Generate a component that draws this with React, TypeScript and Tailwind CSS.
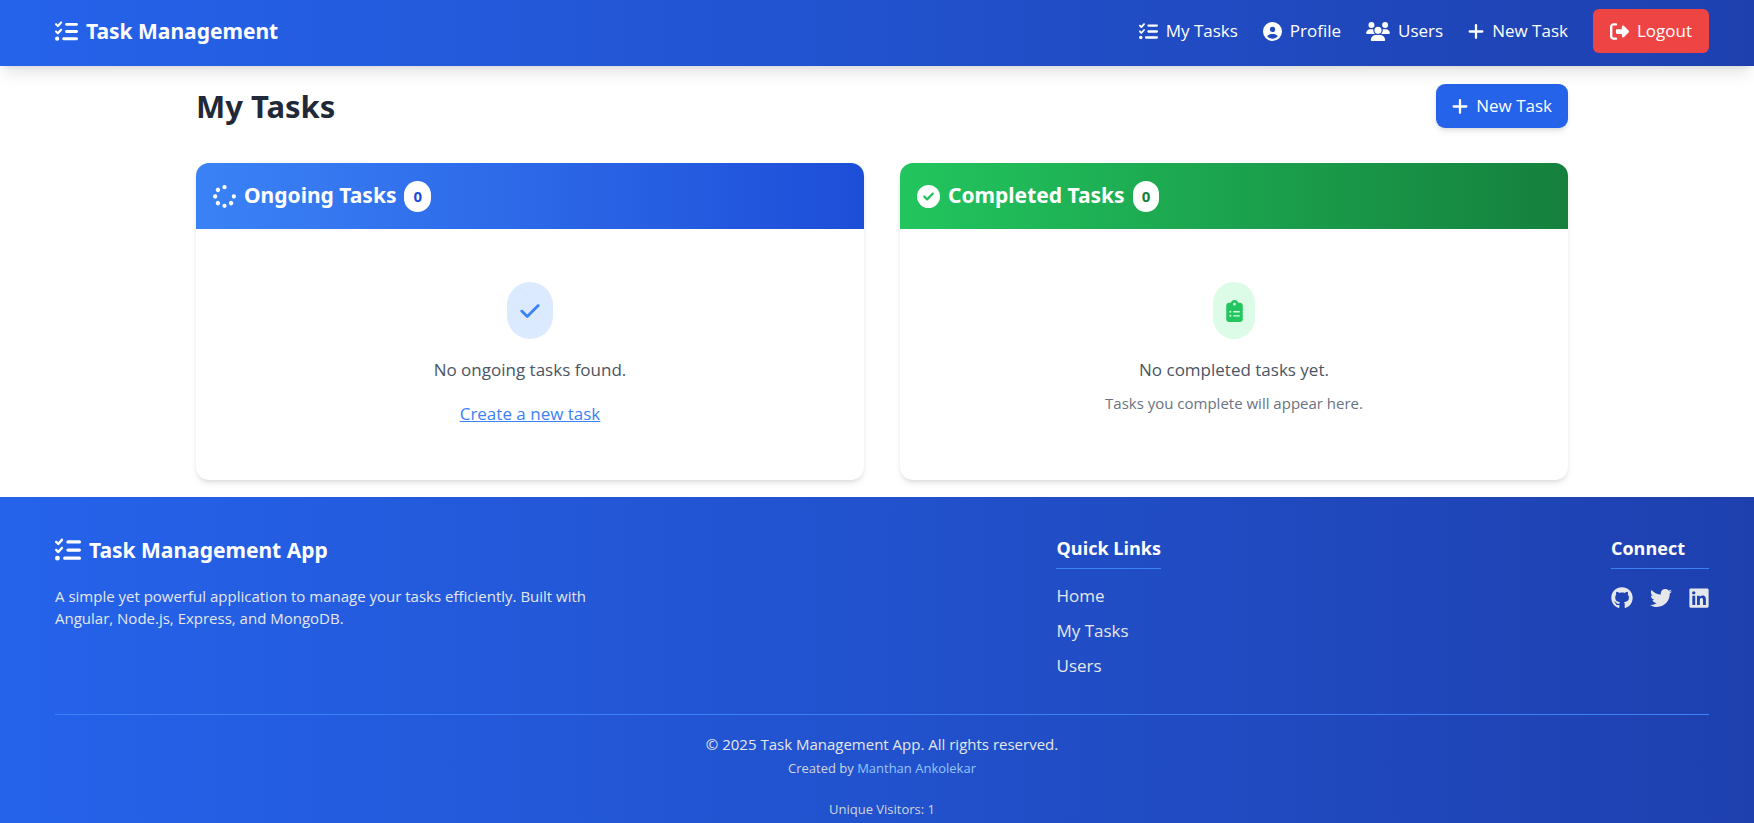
import type { ReactNode } from "react";
import {
  FaCheck,
  FaCircleCheck,
  FaCircleUser,
  FaClipboardList,
  FaGithub,
  FaLinkedin,
  FaListCheck,
  FaPlus,
  FaRightFromBracket,
  FaSpinner,
  FaTwitter,
  FaUsers,
} from "react-icons/fa6";

function NavLink({ icon, children }: { icon: ReactNode; children: ReactNode }) {
  return (
    <a href="#" className="flex items-center gap-2 text-[17px] leading-[26px]">
      {icon}
      {children}
    </a>
  );
}

function Header() {
  return (
    <header className="relative bg-linear-to-r/srgb from-[#2563eb] to-[#1e40af] text-white shadow-[0_10px_15px_-3px_rgba(0,0,0,0.1),0_4px_6px_-4px_rgba(0,0,0,0.1)]">
      <div className="flex items-center justify-between pt-[9px] pr-[45px] pb-[13px] pl-[55px]">
        <a href="#" className="flex items-center gap-2 font-['Noto_Sans',sans-serif] text-[21px] leading-[32px] font-bold">
          <FaListCheck className="size-[23px]" />
          Task Management
        </a>
        <nav className="flex items-center gap-[25px]">
          <NavLink icon={<FaListCheck className="size-[19px]" />}>My Tasks</NavLink>
          <NavLink icon={<FaCircleUser className="size-[19px]" />}>Profile</NavLink>
          <NavLink icon={<FaUsers className="h-[19px] w-[24px]" />}>Users</NavLink>
          <NavLink icon={<FaPlus className="h-[19px] w-4" />}>New Task</NavLink>
          <button
            type="button"
            className="flex h-11 items-center gap-2 rounded-md bg-[#ef4444] px-[17px] py-[9px] text-[17px] leading-[26px]"
          >
            <FaRightFromBracket className="size-[19px]" />
            Logout
          </button>
        </nav>
      </div>
    </header>
  );
}

type TaskCardProps = {
  title: string;
  icon: ReactNode;
  headerClass: string;
  countClass: string;
  children: ReactNode;
};

function TaskCard({ title, icon, headerClass, countClass, children }: TaskCardProps) {
  return (
    <section className="flex-1 overflow-hidden rounded-[13px] bg-white shadow-[0_4px_6px_-1px_rgba(0,0,0,0.1),0_2px_4px_-2px_rgba(0,0,0,0.1)]">
      <h2
        className={`flex h-[66px] items-center gap-2 px-[17px] font-['Noto_Sans',sans-serif] text-[21px] font-bold text-white ${headerClass}`}
      >
        {icon}
        {title}
        <span className={`rounded-full bg-white px-[9px] py-1 text-[15px] leading-[23px] ${countClass}`}>0</span>
      </h2>
      <div className="flex h-[251px] flex-col items-center pt-[53px] text-center">{children}</div>
    </section>
  );
}

function Footer() {
  return (
    <footer className="grow bg-linear-to-r/srgb from-[#2563eb] to-[#1e40af] pt-[35px] pr-[45px] pl-[55px] text-[#e5e7eb]">
      <div className="flex h-[182px] items-start justify-between">
        <div className="w-1/3">
          <h2 className="flex items-center gap-2 font-['Noto_Sans',sans-serif] text-[21px] leading-[36px] font-bold text-white">
            <FaListCheck className="size-[26px]" />
            Task Management App
          </h2>
          <p className="mt-[17px] text-[15px] leading-[22px]">
            A simple yet powerful application to manage your tasks efficiently. Built with Angular, Node.js, Express, and
            MongoDB.
          </p>
        </div>
        <div>
          <h3 className="border-b border-[#3b82f6] pt-0.5 pb-1.5 text-[18px] leading-[28px] font-bold text-white">
            Quick Links
          </h3>
          <ul className="mt-[14px] flex flex-col gap-[9px] text-[17px] leading-[26px]">
            <li><a href="#">Home</a></li>
            <li><a href="#">My Tasks</a></li>
            <li><a href="#">Users</a></li>
          </ul>
        </div>
        <div>
          <h3 className="border-b border-[#3b82f6] pt-0.5 pb-1.5 text-[18px] leading-[28px] font-bold text-white">
            Connect
          </h3>
          <div className="mt-[18px] flex gap-[17px]">
            <a href="#" aria-label="GitHub"><FaGithub className="size-[22px]" /></a>
            <a href="#" aria-label="Twitter"><FaTwitter className="size-[22px]" /></a>
            <a href="#" aria-label="LinkedIn"><FaLinkedin className="h-[22px] w-5" /></a>
          </div>
        </div>
      </div>
      <div className="border-t border-[#3b82f6] pt-[17px] text-center">
        <p className="text-[15px] leading-[24px]">© 2025 Task Management App. All rights reserved.</p>
        <p className="text-[13px] leading-[24px] text-[#d1d5db]">
          Created by <a href="#" className="text-[#93c5fd]">Manthan Ankolekar</a>
        </p>
        <p className="mt-[18px] text-[13px] leading-[22px] text-[#d1d5db]">Unique Visitors: 1</p>
      </div>
    </footer>
  );
}

export default function App() {
  return (
    <div className="flex min-h-screen flex-col bg-white font-['Open_Sans','Noto_Sans',sans-serif]">
      <Header />
      <main className="pt-[18px] pb-[17px] pl-[10px]">
        <div className="mx-auto max-w-[1372px]">
          <div className="flex items-center justify-between">
            <h1 className="font-['Noto_Sans',sans-serif] text-[31px] leading-[44px] font-bold text-[#1f2937]">My Tasks</h1>
            <a
              href="#"
              className="flex h-11 items-center gap-2 rounded-[9px] bg-[#2563eb] px-4 text-[17px] leading-[26px] text-white shadow-[0_4px_6px_-1px_rgba(0,0,0,0.1),0_2px_4px_-2px_rgba(0,0,0,0.1)]"
            >
              <FaPlus className="h-[19px] w-4" />
              New Task
            </a>
          </div>
          <div className="mt-[35px] flex gap-9">
            <TaskCard
              title="Ongoing Tasks"
              icon={<FaSpinner className="size-[23px]" />}
              headerClass="bg-linear-to-r/srgb from-[#3b82f6] to-[#1d4ed8]"
              countClass="text-[#1d4ed8]"
            >
              <div className="flex h-[57px] w-[46px] items-center justify-center rounded-full bg-[#dbeafe] text-[#3b82f6]">
                <FaCheck className="h-[22px] w-5" />
              </div>
              <p className="mt-[18px] text-[17px] leading-[26px] text-[#4b5563]">No ongoing tasks found.</p>
              <a href="#" className="mt-[18px] text-[17px] leading-[26px] text-[#3b82f6] underline">
                Create a new task
              </a>
            </TaskCard>
            <TaskCard
              title="Completed Tasks"
              icon={<FaCircleCheck className="size-[23px]" />}
              headerClass="bg-linear-to-r/srgb from-[#22c55e] to-[#15803d]"
              countClass="text-[#15803d]"
            >
              <div className="flex h-[57px] w-[42px] items-center justify-center rounded-full bg-[#dcfce7] text-[#22c55e]">
                <FaClipboardList className="h-[22px] w-[17px]" />
              </div>
              <p className="mt-[18px] text-[17px] leading-[26px] text-[#4b5563]">No completed tasks yet.</p>
              <p className="mt-[9px] text-[15px] leading-[22px] text-[#6b7280]">Tasks you complete will appear here.</p>
            </TaskCard>
          </div>
        </div>
      </main>
      <Footer />
    </div>
  );
}
